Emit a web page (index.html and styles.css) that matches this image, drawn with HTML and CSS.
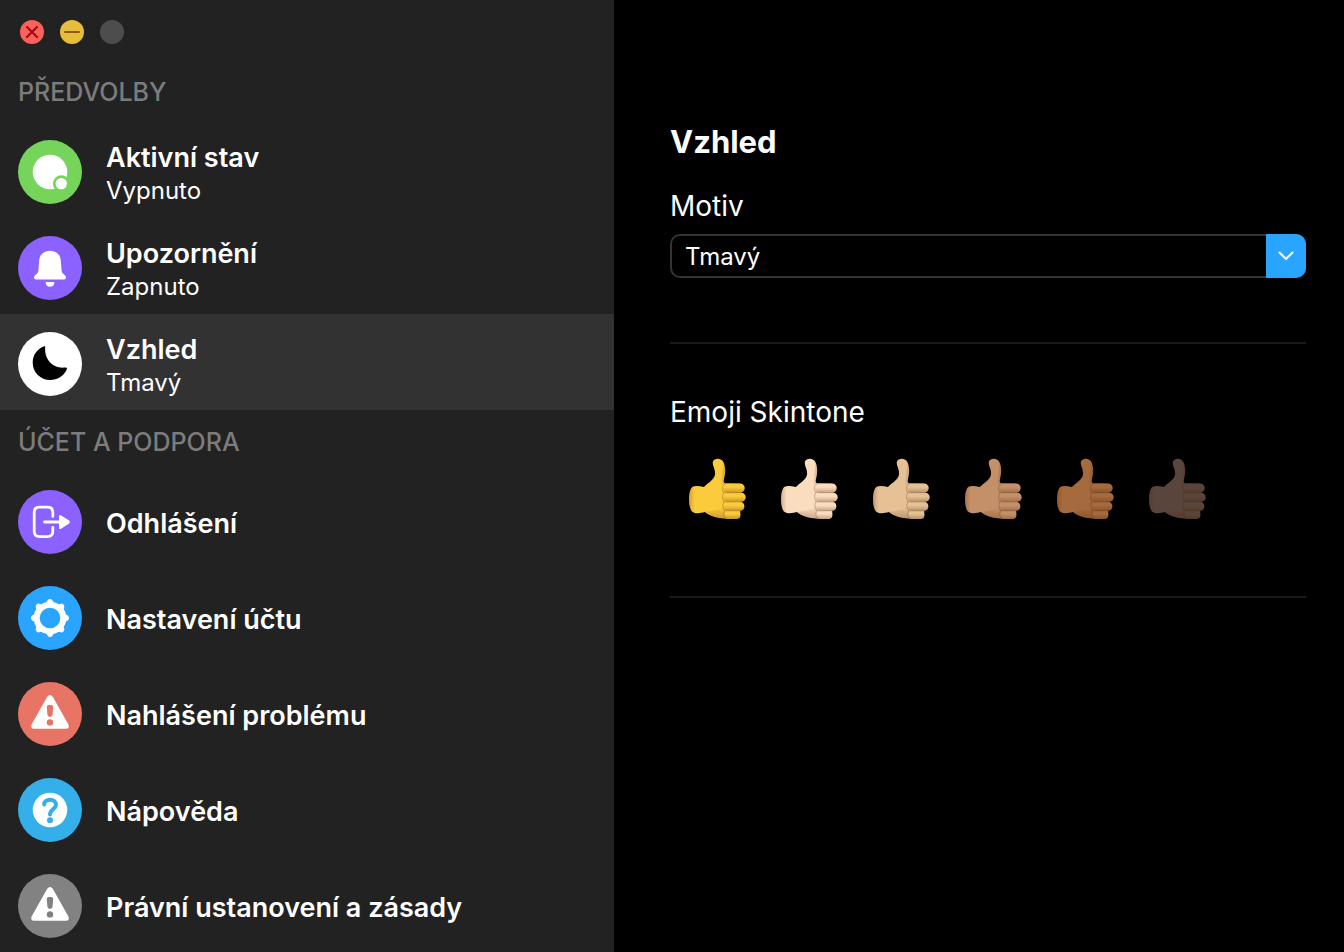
FILE: index.html
```html
<!DOCTYPE html>
<html lang="cs">
<head>
<meta charset="utf-8">
<meta name="viewport" content="width=device-width, initial-scale=1">
<title>Předvolby</title>
<link rel="stylesheet" href="styles.css">
</head>
<body>
<svg class="sprite" aria-hidden="true">
  <symbol id="warning" viewBox="0 0 64 64">
    <path d="M29.2 14.8Q32 11.2 34.8 14.8L50.4 42.4Q51.8 46.6 48 46.8H16Q12.2 46.6 13.6 42.4Z" fill="#fff"/>
    <path d="M28.8 24.8Q28.8 23 30.6 23H33.4Q35.2 23 35.2 24.8L34.6 32.6Q34.2 35 32 35T29.4 32.6Z" fill="currentColor"/>
    <circle cx="32" cy="40.4" r="3.2" fill="currentColor"/>
  </symbol>
  <symbol id="thumb" viewBox="0 0 176 188">
    <path d="M14 87C0 96 0 150 12 162C22 170 38 168 51 164C64 174 84 183 116 184H148Q158 182 158 172L162 100L158 78L114 77C106 75 108 68 110 60C114 45 114 28 108 14C102-2 80 0 76 10C72 24 84 32 82 50C80 66 62 74 48 88C36 85 22 84 14 87Z" fill="currentColor"/>
    <path d="M14 87C0 96 0 150 12 162C22 170 38 168 51 164C42 145 42 106 48 88C36 85 22 84 14 87Z" fill="url(#wristShade)"/>
    <path d="M51 164C64 174 84 183 116 184L108 150C88 158 68 160 51 164Z" fill="url(#palmShade)"/>
    <path d="M108 14C114 30 114 45 110 60C108 68 106 74 114 77L101 85C94 70 106 42 108 14Z" fill="url(#thumbShade)"/>
    <g fill="currentColor">
      <rect x="105" y="77" width="67" height="28" rx="14"/>
      <rect x="106" y="105" width="69" height="28" rx="14"/>
      <rect x="107" y="133" width="64" height="27" rx="13"/>
      <rect x="110" y="160" width="49" height="24" rx="11"/>
    </g>
    <g fill="url(#fingerShade)">
      <rect x="105" y="77" width="67" height="28" rx="14"/>
      <rect x="106" y="105" width="69" height="28" rx="14"/>
      <rect x="107" y="133" width="64" height="27" rx="13"/>
      <rect x="110" y="160" width="49" height="24" rx="11"/>
    </g>
    <path d="M112 80C99 86 104 102 109 105C103 112 104 126 109 132C104 139 105 153 111 160C107 168 108 178 116 183M109 105H164M109 133H166M111 160H160" class="crease"/>
  </symbol>
  <defs>
    <linearGradient id="wristShade"><stop offset="0" stop-color="#5a2800" stop-opacity=".25"/><stop offset=".35" stop-color="#5a2800" stop-opacity="0"/></linearGradient>
    <linearGradient id="palmShade" x2="0" y2="1"><stop offset="0" stop-color="#5a2800" stop-opacity="0"/><stop offset="1" stop-color="#5a2800" stop-opacity=".3"/></linearGradient>
    <linearGradient id="thumbShade"><stop offset="0" stop-color="#5a2800" stop-opacity="0"/><stop offset="1" stop-color="#5a2800" stop-opacity=".25"/></linearGradient>
    <linearGradient id="fingerShade" x2="0" y2="1"><stop offset=".4" stop-color="#5a2800" stop-opacity="0"/><stop offset="1" stop-color="#4a2000" stop-opacity=".3"/></linearGradient>
  </defs>
</svg>

<div class="window">
  <aside class="sidebar">
    <div class="controls">
      <button class="control control-close" aria-label="Zavřít"><svg viewBox="0 0 24 24"><path d="M7 7 17 17M17 7 7 17" stroke="#9b0712" stroke-width="2" stroke-linecap="round"/></svg></button>
      <button class="control control-minimize" aria-label="Minimalizovat"><svg viewBox="0 0 24 24"><path d="M5 12H19" stroke="#8c5c0c" stroke-width="2" stroke-linecap="round"/></svg></button>
      <button class="control control-zoom" aria-label="Zvětšit" disabled></button>
    </div>

    <nav>
      <h2 class="group-title">PŘEDVOLBY</h2>
      <button class="row">
        <svg class="icon green" viewBox="0 0 64 64"><circle cx="32" cy="32" r="17.3" fill="#fff"/><circle cx="43.3" cy="43.6" r="8.4" fill="currentColor"/><circle cx="43.3" cy="43.6" r="5.7" fill="#fff"/></svg>
        <span class="text"><span class="name">Aktivní stav</span><span class="value">Vypnuto</span></span>
      </button>
      <button class="row">
        <svg class="icon purple" viewBox="0 0 64 64"><path d="M32 14.7C25 14.7 21.4 19.2 21.1 25L20.5 33.5C20.3 36 19.7 37.3 18 38.4C16.6 39.3 16 40.2 16 41.5Q16 43.4 18 43.4H46Q48 43.4 48 41.5C48 40.2 47.4 39.3 46 38.4C44.3 37.3 43.7 36 43.5 33.5L42.9 25C42.6 19.2 39 14.7 32 14.7Z" fill="#fff"/><path d="M27.6 46H36.4C36.4 49 34.6 50.8 32 50.8S27.6 49 27.6 46Z" fill="#fff"/></svg>
        <span class="text"><span class="name">Upozornění</span><span class="value">Zapnuto</span></span>
      </button>
      <button class="row selected" aria-current="page">
        <svg class="icon white" viewBox="0 0 64 64"><path d="M25.4 14.6C26.7 13.8 27.3 14 27.2 15.3C26.2 27.5 34.8 36.9 47 35.6C48.8 35.3 49.4 36.1 48.6 37.7C45.8 44.1 39.3 48 32.2 48C22.4 48 14.7 40.3 14.7 30.7C14.7 23.6 18.8 17.3 25.4 14.6Z" fill="#000"/></svg>
        <span class="text"><span class="name">Vzhled</span><span class="value">Tmavý</span></span>
      </button>

      <h2 class="group-title">ÚČET A PODPORA</h2>
      <button class="row">
        <svg class="icon purple" viewBox="0 0 64 64"><path d="M34.8 26.4V22.5Q34.8 17.2 29.5 17.2H21.5Q16.2 17.2 16.2 22.5V41.3Q16.2 46.6 21.5 46.6H29.5Q34.8 46.6 34.8 41.3V37.4M26.5 32H43" fill="none" stroke="#fff" stroke-width="2.8" stroke-linecap="round"/><path d="M41 26.5Q41 24.2 43 25.5L51.2 30.6Q52.8 32 51.2 33.4L43 38.7Q41 39.8 41 37.5Z" fill="#fff"/></svg>
        <span class="text"><span class="name">Odhlášení</span></span>
      </button>
      <button class="row">
        <svg class="icon blue" viewBox="0 0 64 64"><circle cx="32" cy="32" r="13.3" fill="none" stroke="#fff" stroke-width="6"/><path d="M28.4 16.4L29.1 15Q29.8 13 32 13T34.9 15L35.6 16.4L39 18H25Z" id="tooth" fill="#fff"/><g><use href="#tooth" transform="rotate(45 32 32)"/><use href="#tooth" transform="rotate(90 32 32)"/><use href="#tooth" transform="rotate(135 32 32)"/><use href="#tooth" transform="rotate(180 32 32)"/><use href="#tooth" transform="rotate(225 32 32)"/><use href="#tooth" transform="rotate(270 32 32)"/><use href="#tooth" transform="rotate(315 32 32)"/></g></svg>
        <span class="text"><span class="name">Nastavení účtu</span></span>
      </button>
      <button class="row">
        <svg class="icon red"><use href="#warning"/></svg>
        <span class="text"><span class="name">Nahlášení problému</span></span>
      </button>
      <button class="row">
        <svg class="icon sky" viewBox="0 0 64 64"><circle cx="32" cy="32" r="17.3" fill="#fff"/><path d="M26.2 26.5C26.2 23.6 28.4 21.8 32 21.8C35.8 21.8 38 23.9 38 26.8C38 31.2 32 31.4 32 36.4" fill="none" stroke="currentColor" stroke-width="4" stroke-linecap="round"/><circle cx="32" cy="42.2" r="3" fill="currentColor"/></svg>
        <span class="text"><span class="name">Nápověda</span></span>
      </button>
      <button class="row">
        <svg class="icon gray"><use href="#warning"/></svg>
        <span class="text"><span class="name">Právní ustanovení a zásady</span></span>
      </button>
    </nav>
  </aside>

  <main class="content">
    <h1 class="title">Vzhled</h1>
    <section class="section">
      <label class="label" for="theme">Motiv</label>
      <div class="select-wrap">
        <select id="theme" class="select"><option>Tmavý</option><option>Světlý</option></select>
        <span class="arrow"><svg viewBox="0 0 40 44"><path d="M13.5 18.5 20 25 26.5 18.5" fill="none" stroke="#fff" stroke-width="2" stroke-linecap="round" stroke-linejoin="round"/></svg></span>
      </div>
    </section>
    <fieldset class="section tones">
      <legend class="label">Emoji Skintone</legend>
      <div class="tone-list">
        <label class="tone tone-1"><input type="radio" name="tone" aria-label="Výchozí" checked><svg><use href="#thumb"/></svg></label>
        <label class="tone tone-2"><input type="radio" name="tone" aria-label="Světlý"><svg><use href="#thumb"/></svg></label>
        <label class="tone tone-3"><input type="radio" name="tone" aria-label="Středně světlý"><svg><use href="#thumb"/></svg></label>
        <label class="tone tone-4"><input type="radio" name="tone" aria-label="Střední"><svg><use href="#thumb"/></svg></label>
        <label class="tone tone-5"><input type="radio" name="tone" aria-label="Středně tmavý"><svg><use href="#thumb"/></svg></label>
        <label class="tone tone-6"><input type="radio" name="tone" aria-label="Tmavý"><svg><use href="#thumb"/></svg></label>
      </div>
    </fieldset>
  </main>
</div>
</body>
</html>
```
FILE: styles.css
```css
* { box-sizing: border-box; }

body {
  margin: 0;
  background: #000;
  color: #fff;
  font-family: Inter, "Liberation Sans", sans-serif;
}

button, select { font: inherit; color: inherit; }

.sprite { position: absolute; width: 0; height: 0; }

.window {
  display: grid;
  grid-template-columns: 614fr 730fr;
  min-height: 100vh;
}

.sidebar { background: #222; min-width: 0; }

.controls {
  display: flex;
  gap: 16px;
  height: 60px;
  padding: 20px 20px 0;
}

.control {
  width: 24px;
  height: 24px;
  padding: 0;
  border: 0;
  border-radius: 50%;
}
.control svg { display: block; }
.control-close { background: #fc605b; }
.control-minimize { background: #e7bd3c; }
.control-zoom { background: #4d4d4d; }

.group-title {
  display: flex;
  align-items: center;
  height: 62px;
  margin: 0;
  padding: 2px 18px 0;
  color: #7c7c7c;
  font-size: 25px;
  font-weight: 500;
}

.row {
  display: flex;
  align-items: center;
  gap: 24px;
  width: 100%;
  min-height: 96px;
  padding: 18px 18px 14px;
  border: 0;
  background: none;
  text-align: left;
}
.row.selected { background: #323232; }

.icon {
  flex: none;
  width: 64px;
  height: 64px;
  border-radius: 50%;
}
.green { color: #76d45b; background: #76d45b; }
.purple { color: #8b61ff; background: #8b61ff; }
.white { color: #fff; background: #fff; }
.blue { color: #29a4ff; background: #29a4ff; }
.red { color: #e87465; background: #e87465; }
.sky { color: #35afea; background: #35afea; }
.gray { color: #828282; background: #828282; }

.text { display: block; margin: -4px 0; padding-top: 3px; }
.name, .value { display: block; }
.name { font-size: 27px; font-weight: 600; line-height: 34px; }
.value { font-size: 24px; line-height: 32px; }

.content { min-width: 0; padding: 120px 38px 0 56px; }

.title {
  margin: 0 0 20px;
  font-size: 31px;
  font-weight: 700;
  line-height: 44px;
}

.section {
  margin: 0 0 46px;
  padding: 0 0 64px;
  border: 0;
  border-bottom: 2px solid #191919;
}

.label {
  display: block;
  padding: 0;
  margin-bottom: 6px;
  font-size: 28px;
  line-height: 44px;
}

.select-wrap { position: relative; }
.select {
  display: block;
  width: 100%;
  height: 44px;
  padding: 0 52px 0 13px;
  appearance: none;
  border: 2px solid #333;
  border-radius: 10px;
  background: #000;
  font-size: 24px;
}
.arrow {
  position: absolute;
  top: 0;
  right: 0;
  width: 40px;
  height: 44px;
  border-radius: 0 10px 10px 0;
  background: #29a4ff;
  pointer-events: none;
}
.arrow svg { display: block; }

.section.tones { padding-bottom: 76px; }
.tones .label { margin-bottom: 24px; }
.tone-list { display: flex; flex-wrap: wrap; gap: 32px; padding: 0 17px; }
.tone { position: relative; width: 60px; height: 62px; }
.tone svg { display: block; width: 60px; height: 62px; }
.tone input { position: absolute; inset: 0; margin: 0; opacity: 0; }

.crease {
  fill: none;
  stroke: #4a2000;
  stroke-opacity: .25;
  stroke-width: 3;
  stroke-linecap: round;
}
.tone-1 { color: #fccb3c; }
.tone-2 { color: #fadcbe; }
.tone-3 { color: #e6c196; }
.tone-4 { color: #c4906a; }
.tone-5 { color: #a56a3d; }
.tone-6 { color: #5a453d; }
```
